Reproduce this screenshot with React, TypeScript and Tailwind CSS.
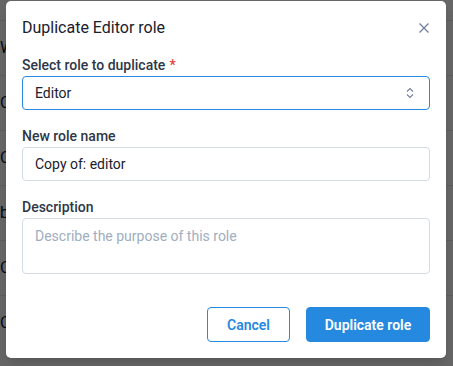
import React from "react";

const rows = ["W", "C", "C", "b", "C", "C"];

function BackgroundTable() {
  return (
    <div className="h-[366px] w-[453px] overflow-hidden bg-white">
      <div className="flex h-5 items-end justify-end pr-[100px]">
        <span className="-mb-[12px] text-sm text-[#1a202c]">Permissions</span>
      </div>
      {rows.map((r, i) => (
        <div key={i} className="flex h-[55px] items-center border-t border-[#e2e8f0]">
          <span className="text-base text-[#1a202c]">{r}</span>
        </div>
      ))}
    </div>
  );
}

function Label({ children, required }: { children: React.ReactNode; required?: boolean }) {
  return (
    <label className="mb-[1px] block text-sm leading-5 font-medium text-[#2d3748]">
      {children}
      {required && <span className="ml-1 text-[#e53e3e]">*</span>}
    </label>
  );
}

export default function App() {
  return (
    <div className="relative h-[366px] w-[453px] overflow-hidden font-['Roboto',sans-serif]">
      <BackgroundTable />
      <div className="absolute inset-0 bg-black/60 pl-[6px] pt-[1px]">
        <div className="flex h-[357px] w-[440px] flex-col rounded-[5px] bg-white px-4 pt-[15px] pb-4 shadow-lg">
          <div className="mb-[15px] flex items-center justify-between">
            <h2 className="text-base leading-6 text-[#1a202c]">Duplicate Editor role</h2>
            <button className="mr-[1px] text-[#718096]" aria-label="Close">
              <svg width="10" height="10" viewBox="0 0 10 10" fill="none" stroke="currentColor" strokeWidth="1.3">
                <path d="M0.5 0.5 9.5 9.5M9.5 0.5 0.5 9.5" />
              </svg>
            </button>
          </div>

          <div>
            <Label required>Select role to duplicate</Label>
            <div className="flex h-[34px] items-center justify-between rounded-[4px] border border-[#2589e0] pr-[15px] pl-3 text-sm text-[#1a202c]">
              <span>Editor</span>
              <svg width="8" height="12" viewBox="0 0 8 12" fill="none" stroke="#718096" strokeWidth="1.1">
                <path d="M1 4.5 4 1.5 7 4.5" />
                <path d="M1 7.5 4 10.5 7 7.5" />
              </svg>
            </div>
          </div>

          <div className="mt-4">
            <Label>New role name</Label>
            <div className="flex h-[34px] items-center rounded-[4px] border border-[#d5dbe3] px-3 text-sm text-[#1a202c]">
              Copy of: editor
            </div>
          </div>

          <div className="mt-4">
            <Label>Description</Label>
            <div className="h-[56px] rounded-[4px] border border-[#d5dbe3] px-3 pt-[7px] text-sm leading-5 text-[#a0aec0]">
              Describe the purpose of this role
            </div>
          </div>

          <div className="mt-[33px] flex justify-end gap-4">
            <button className="h-[35px] rounded-[4px] border border-[#2589e0] bg-white px-[19px] text-sm font-semibold text-[#2589e0]">
              Cancel
            </button>
            <button className="h-[35px] w-[124px] rounded-[4px] border border-[#2589e0] bg-[#2589e0] text-sm font-semibold text-white">
              Duplicate role
            </button>
          </div>
        </div>
      </div>
    </div>
  );
}
